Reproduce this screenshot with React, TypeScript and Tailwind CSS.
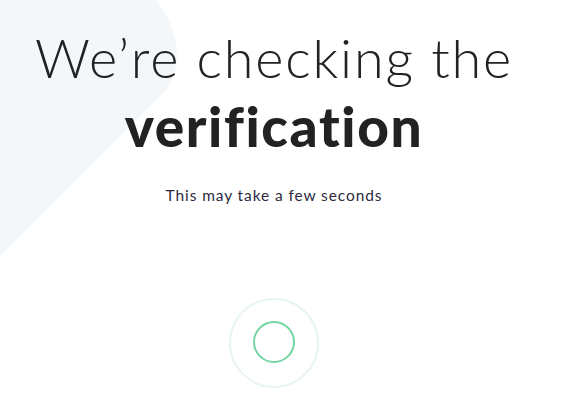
import React from 'react'

const Blob = () => (
    <svg className="absolute left-0 top-0" width="200" height="270" viewBox="0 0 200 270">
        <path d="M0 0 L156 0 C 178 28, 186 68, 163 93 L0 256 Z" fill="#f4f7fa" />
    </svg>
)

const Spinner = () => (
    <svg width="92" height="92" viewBox="0 0 92 92">
        <circle cx="46" cy="46" r="44" fill="none" stroke="#e7f5ee" strokeWidth="2" />
        <circle cx="46" cy="45" r="20" fill="none" stroke="#72d49f" strokeWidth="2" />
    </svg>
)

export default function App() {
    return (
        <div className="relative w-[570px] h-[407px] overflow-hidden bg-white font-['Lato',sans-serif]">
            <Blob />
            <div className="relative flex flex-col items-center pr-[22px]">
                <h1 className="mt-[24px] text-center text-[#222] leading-[68px]">
                    <span className="block text-[54px] font-light tracking-[1.8px]">We’re checking the</span>
                    <span className="block text-[55px] font-black tracking-[1.6px]">verification</span>
                </h1>
                <p className="mt-[24px] text-[15.5px] text-[#2d2a3e] tracking-[0.9px]">This may take a few seconds</p>
                <div className="mt-[90px]">
                    <Spinner />
                </div>
            </div>
        </div>
    )
}
